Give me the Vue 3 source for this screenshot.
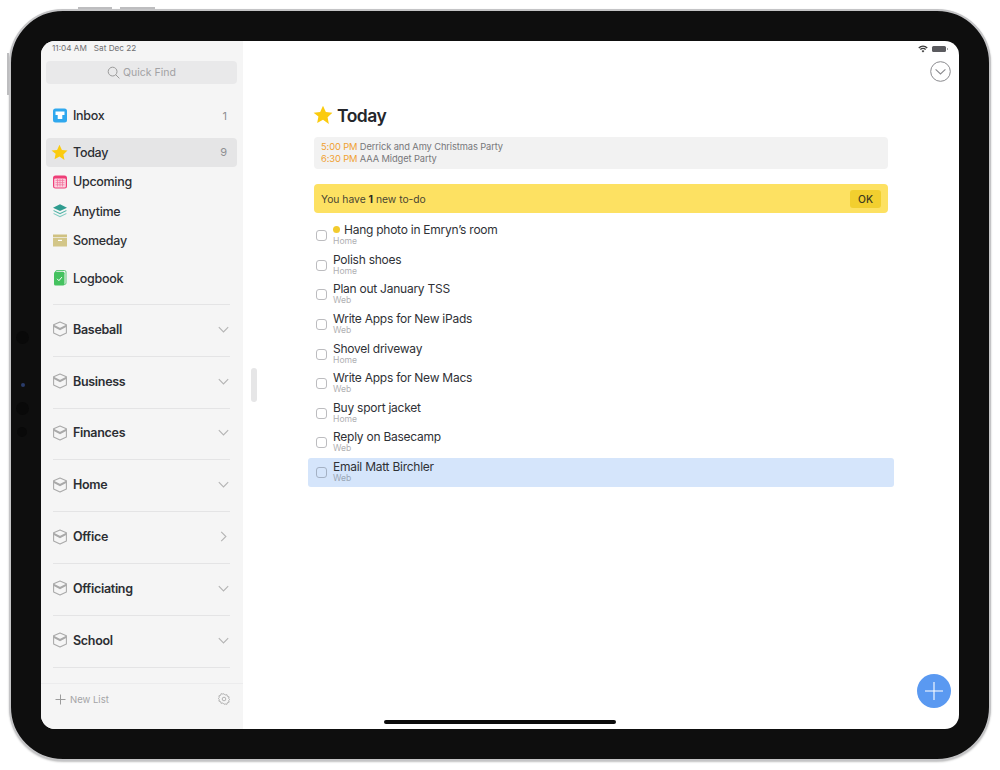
<template>
  <div class="page">
    <div class="device">
      <span class="hw-btn hw-top-a"></span>
      <span class="hw-btn hw-top-b"></span>
      <span class="hw-btn hw-left"></span>
      <span class="cam cam-a"></span>
      <span class="cam cam-b"></span>
      <span class="cam cam-c"></span>
      <span class="cam cam-d"></span>

      <div class="screen">
        <aside class="sidebar">
          <div class="status-left">
            <span>11:04 AM</span>
            <span>Sat Dec 22</span>
          </div>
          <div class="search">
            <svg width="13" height="13" viewBox="0 0 13 13" fill="none" stroke="#9a9a9a" stroke-width="1">
              <circle cx="5.6" cy="5.6" r="4.4" />
              <path d="M8.9 8.9l3.2 3.2" stroke-linecap="round" />
            </svg>
            <span>Quick Find</span>
          </div>

          <div class="nav-item inbox">
            <svg class="nav-icon" width="15" height="15" viewBox="0 0 15 15">
              <rect x="0.5" y="0.5" width="14" height="14" rx="2.5" fill="#2fa8ee" />
              <path d="M3 3.5h9v3.6H9.8v4H5.2v-4H3z" fill="#fff" />
            </svg>
            <span class="nav-label">Inbox</span>
            <span class="count">1</span>
          </div>

          <div class="nav-item active">
            <svg class="nav-icon star" width="17" height="17" viewBox="0 0 24 24">
              <path d="M12 1l3.4 7.3 7.9 1-5.8 5.5 1.5 7.9L12 17.8l-7 3.9 1.5-7.9L.7 9.3l7.9-1z" fill="#fbcb0e" />
            </svg>
            <span class="nav-label">Today</span>
            <span class="count">9</span>
          </div>

          <div class="nav-item">
            <svg class="nav-icon" width="15" height="14" viewBox="0 0 15 14">
              <rect x="0.5" y="0.5" width="14" height="13" rx="2.5" fill="#ee3f78" />
              <rect x="1.7" y="3.4" width="11.6" height="9" rx="1" fill="#fbd3e0" />
              <path d="M3 5.4h9M3 7.6h9M3 9.8h9M5 4v7.5M7.5 4v7.5M10 4v7.5" stroke="#f0709b" stroke-width="0.7" />
            </svg>
            <span class="nav-label">Upcoming</span>
          </div>

          <div class="nav-item">
            <svg class="nav-icon" width="15" height="14" viewBox="0 0 15 14">
              <path d="M7.5 0.3l7 3.4-7 3.4-7-3.4z" fill="#2f9c8f" />
              <path d="M1.6 6.2l5.9 2.9 5.9-2.9 1.1 .6-7 3.4-7-3.4z" fill="#4db3a6" />
              <path d="M1.6 9.2l5.9 2.9 5.9-2.9 1.1 .6-7 3.4-7-3.4z" fill="#7fcabf" />
            </svg>
            <span class="nav-label">Anytime</span>
          </div>

          <div class="nav-item">
            <svg class="nav-icon" width="15" height="13" viewBox="0 0 15 13">
              <rect x="0.5" y="0.5" width="14" height="2.8" fill="#cfc181" />
              <rect x="0.5" y="4" width="14" height="8.5" fill="#d3c688" />
              <rect x="5.5" y="5.8" width="4" height="1.2" fill="#fff" />
            </svg>
            <span class="nav-label">Someday</span>
          </div>

          <div class="nav-item logbook">
            <svg class="nav-icon" width="13" height="16" viewBox="0 0 13 16">
              <rect x="2" y="0.5" width="10.5" height="14" rx="1.5" fill="none" stroke="#5fc77a" />
              <rect x="0.5" y="1.8" width="10.5" height="13.7" rx="1.5" fill="#44c25f" />
              <path d="M3.6 8.8l1.8 1.9 3-3.6" fill="none" stroke="#fff" stroke-width="1" />
            </svg>
            <span class="nav-label">Logbook</span>
          </div>

          <div class="areas">
            <div v-for="area in areas" :key="area.name" class="area">
              <svg class="nav-icon" width="15" height="16" viewBox="0 0 15 15" fill="none" stroke="#a9a9a9" stroke-width="1">
                <path d="M7.5 1l6 2.6v7.6l-6 2.8-6-2.8V3.6z" stroke-linejoin="round" />
                <path d="M1.5 3.9l6 3 6-3M1.5 5l6 3 6-3" />
              </svg>
              <span class="nav-label">{{ area.name }}</span>
              <svg width="11" height="11" viewBox="0 0 11 11" fill="none" stroke="#b4b4b4" stroke-width="1.1" class="chev">
                <path v-if="area.open" d="M.8 3.2l4.7 4.7 4.7-4.7" />
                <path v-else d="M3.2.8l4.7 4.7-4.7 4.7" />
              </svg>
            </div>
          </div>

          <div class="sidebar-foot">
            <svg width="11" height="11" viewBox="0 0 11 11" stroke="#9c9c9c" stroke-width="1">
              <path d="M5.5.5v10M.5 5.5h10" />
            </svg>
            <span class="new-list">New List</span>
            <svg width="12" height="12" viewBox="0 0 24 24" fill="none" stroke="#a8a8a8" stroke-width="1.7">
              <circle cx="12" cy="12" r="3.6" />
              <path d="M12 1.5l2.4 2.6 3.4-.8 1 3.4 3.4 1-.8 3.4 2 1.9-2 1.9.8 3.4-3.4 1-1 3.4-3.4-.8L12 22.5l-2.4-2.6-3.4.8-1-3.4-3.4-1 .8-3.4-2-1.9 2-1.9-.8-3.4 3.4-1 1-3.4 3.4.8z" stroke-linejoin="round" />
            </svg>
          </div>
        </aside>

        <span class="grabber"></span>

        <main class="main">
          <div class="status-right">
            <svg width="10" height="8" viewBox="0 0 10 8" fill="#3a3a3a">
              <path d="M5 7.6L3.6 6a2 2 0 0 1 2.8 0zM2.8 5.1l-.9-1a4.6 4.6 0 0 1 6.2 0l-.9 1a3.3 3.3 0 0 0-4.4 0zM1.2 3.4L.3 2.4a7 7 0 0 1 9.4 0l-.9 1a5.7 5.7 0 0 0-7.6 0z" />
            </svg>
            <span class="battery"></span>
          </div>
          <div class="top-action">
            <svg width="21" height="21" viewBox="0 0 21 21" fill="none" stroke="#8a8a8e" stroke-width="1">
              <circle cx="10.5" cy="10.5" r="9.8" />
              <path d="M5.6 8.4l4.9 4.6 4.9-4.6" stroke-width="1.1" />
            </svg>
          </div>

          <div class="content">
            <h1 class="title">
              <svg width="20" height="20" viewBox="0 0 24 24">
                <path d="M12 1l3.4 7.3 7.9 1-5.8 5.5 1.5 7.9L12 17.8l-7 3.9 1.5-7.9L.7 9.3l7.9-1z" fill="#fbcb0e" />
              </svg>
              Today
            </h1>

            <div class="events">
              <div v-for="ev in events" :key="ev.time" class="event">
                <span class="event-time">{{ ev.time }}</span> {{ ev.name }}
              </div>
            </div>

            <div class="banner">
              <span>You have <b>1</b> new to-do</span>
              <span class="ok">OK</span>
            </div>

            <div class="todos">
              <div v-for="todo in todos" :key="todo.title" class="todo" :class="{ selected: todo.selected }">
                <span class="check"></span>
                <div class="todo-text">
                  <div class="todo-title">
                    <span v-if="todo.isNew" class="dot"></span>{{ todo.title }}
                  </div>
                  <div class="todo-sub">{{ todo.area }}</div>
                </div>
              </div>
            </div>
          </div>

          <button class="fab" aria-label="Add">
            <svg width="18" height="18" viewBox="0 0 18 18" stroke="#fff" stroke-width="1.1">
              <path d="M9 0v18M0 9h18" />
            </svg>
          </button>
          <span class="home-bar"></span>
        </main>
      </div>
    </div>
  </div>
</template>

<script setup>
const areas = [
  { name: "Baseball", open: true },
  { name: "Business", open: true },
  { name: "Finances", open: true },
  { name: "Home", open: true },
  { name: "Office", open: false },
  { name: "Officiating", open: true },
  { name: "School", open: true },
];

const events = [
  { time: "5:00 PM", name: "Derrick and Amy Christmas Party" },
  { time: "6:30 PM", name: "AAA Midget Party" },
];

const todos = [
  { title: "Hang photo in Emryn’s room", area: "Home", isNew: true },
  { title: "Polish shoes", area: "Home" },
  { title: "Plan out January TSS", area: "Web" },
  { title: "Write Apps for New iPads", area: "Web" },
  { title: "Shovel driveway", area: "Home" },
  { title: "Write Apps for New Macs", area: "Web" },
  { title: "Buy sport jacket", area: "Home" },
  { title: "Reply on Basecamp", area: "Web" },
  { title: "Email Matt Birchler", area: "Web", selected: true },
];
</script>

<style>
html,
body {
  margin: 0;
  background: #fff;
}
</style>

<style scoped>
.page {
  width: 1000px;
  height: 770px;
  box-sizing: border-box;
  padding: 9px;
  overflow: hidden;
  font-family: Inter, "Liberation Sans", sans-serif;
  color: #2a2c30;
}

.device {
  position: relative;
  width: 982px;
  height: 752px;
  box-sizing: border-box;
  padding: 30px;
  background: #0e0e0e;
  border: 2px solid #c4c4c6;
  border-radius: 54px;
  box-shadow: 0 1px 2px rgba(0, 0, 0, 0.25);
}

.hw-btn {
  position: absolute;
  background: #bdbdbf;
}

.hw-top-a {
  top: -4px;
  left: 67px;
  width: 34px;
  height: 2px;
}

.hw-top-b {
  top: -4px;
  left: 109px;
  width: 35px;
  height: 2px;
}

.hw-left {
  top: 42px;
  left: -4px;
  width: 2px;
  height: 42px;
}

.cam {
  position: absolute;
  left: 5px;
  width: 13px;
  height: 13px;
  border-radius: 50%;
  background: #090909;
}

.cam-a {
  top: 320px;
}

.cam-b {
  top: 372px;
  left: 10px;
  width: 4px;
  height: 4px;
  background: #2a3c6a;
}

.cam-c {
  top: 391px;
}

.cam-d {
  top: 416px;
  left: 6px;
  width: 10px;
  height: 10px;
}

.screen {
  position: relative;
  display: flex;
  width: 918px;
  height: 688px;
  background: #fff;
  border-radius: 14px;
  overflow: hidden;
}

.sidebar {
  display: flex;
  flex-direction: column;
  flex: 0 0 202px;
  box-sizing: border-box;
  padding: 0 6px 0 5px;
  background: #f5f5f5;
}

.status-left {
  display: flex;
  gap: 7px;
  flex: none;
  height: 20px;
  padding: 2px 0 0 6px;
  box-sizing: border-box;
  font-size: 8.2px;
  line-height: 11px;
  color: #6f6f72;
}

.search {
  display: flex;
  align-items: center;
  justify-content: center;
  gap: 3px;
  height: 23px;
  flex: none;
  background: #e9e9ea;
  border-radius: 4px;
  font-size: 10.5px;
  color: #a2a2a4;
}

.nav-item {
  display: flex;
  align-items: center;
  flex: none;
  height: 29.5px;
  padding: 0 10px 0 7px;
  border-radius: 4px;
}

.nav-item.inbox {
  margin-top: 17px;
}

.nav-item.active {
  margin-top: 7px;
  background: #e5e5e6;
}

.nav-item.logbook {
  margin-top: 8px;
}

.nav-icon {
  flex: none;
  width: 16px;
  margin-left: -1px;
  margin-right: 5px;
}

.star {
  width: 17px;
  margin-left: -2px;
}

.nav-label {
  flex: 1;
  font-size: 12.5px;
  font-weight: 500;
  letter-spacing: -0.3px;
  color: #2c2e33;
}

.count {
  font-size: 11px;
  color: #8f8f92;
}

.areas {
  display: flex;
  flex-direction: column;
  flex: none;
  margin: 11px 7px 0 7px;
  border-top: 1px solid #e4e4e5;
}

.area {
  display: flex;
  align-items: center;
  box-sizing: border-box;
  height: 51.8px;
  padding-bottom: 2px;
  border-bottom: 1px solid #e4e4e5;
}

.area .nav-label {
  font-weight: 600;
}

.chev {
  flex: none;
  margin-right: 1px;
}

.sidebar-foot {
  display: flex;
  align-items: center;
  gap: 4px;
  flex: none;
  height: 46px;
  margin: 15px -6px 0 -5px;
  padding: 0 13px 14px 14px;
  border-top: 1px solid #ececed;
  box-sizing: border-box;
}

.new-list {
  flex: 1;
  font-size: 9.5px;
  color: #a4a4a6;
}

.grabber {
  position: absolute;
  left: 210px;
  top: 327px;
  width: 6px;
  height: 34px;
  border-radius: 3px;
  background: #e6e6e7;
}

.main {
  flex: 1;
  min-width: 0;
}

.status-right {
  display: flex;
  justify-content: flex-end;
  align-items: center;
  gap: 4px;
  height: 15px;
  padding: 0 13px 0 0;
}

.battery {
  position: relative;
  width: 14px;
  height: 6px;
  background: #5b5b5f;
  border-radius: 1.5px;
}

.battery::after {
  content: "";
  position: absolute;
  right: -2px;
  top: 2px;
  width: 1px;
  height: 2px;
  background: #a8a8aa;
}

.top-action {
  display: flex;
  justify-content: flex-end;
  height: 21px;
  margin-top: 5px;
  padding-right: 8px;
}

.content {
  width: 574px;
  margin-left: 71px;
  padding-top: 20px;
}

.title {
  display: flex;
  align-items: center;
  gap: 4px;
  margin: 0 0 0 -1px;
  height: 26px;
  font-size: 17.5px;
  font-weight: 600;
  letter-spacing: -0.5px;
  color: #24262b;
}

.events {
  margin-top: 9px;
  padding: 4px 7px;
  height: 32px;
  box-sizing: border-box;
  background: #f2f2f2;
  border-radius: 4px;
  font-size: 9.3px;
  line-height: 12px;
  letter-spacing: -0.1px;
  color: #77777a;
}

.event-time {
  color: #f0a030;
}

.banner {
  display: flex;
  align-items: center;
  justify-content: space-between;
  margin-top: 15px;
  height: 29px;
  padding: 0 7px;
  background: #fde162;
  border-radius: 4px;
  font-size: 10.3px;
  color: #4a4632;
}

.banner b {
  color: #26261f;
}

.ok {
  display: flex;
  align-items: center;
  justify-content: center;
  width: 31px;
  height: 18px;
  background: #f2cf2f;
  border-radius: 3px;
  font-size: 10.3px;
  font-weight: 500;
  color: #3e3a20;
}

.todos {
  margin: 8px -6px 0 -6px;
}

.todo {
  display: flex;
  align-items: center;
  height: 29.6px;
  padding-left: 8px;
  border-radius: 3px;
}

.todo.selected {
  background: #d5e5fb;
}

.check {
  flex: none;
  width: 9px;
  height: 9px;
  background: #fff;
  border: 1px solid #bcbcbf;
  border-radius: 3px;
}

.selected .check {
  background: #d5e5fb;
  border-color: #a4b1c4;
}

.todo-text {
  margin-left: 6px;
  margin-top: -3px;
}

.todo-title {
  display: flex;
  align-items: center;
  font-size: 12px;
  line-height: 15px;
  letter-spacing: -0.25px;
  color: #2f3136;
}

.dot {
  width: 7px;
  height: 7px;
  margin-right: 4px;
  border-radius: 50%;
  background: #f2cb2e;
}

.todo-sub {
  font-size: 8.6px;
  line-height: 9px;
  color: #b0b0b3;
}

.selected .todo-sub {
  color: #9aa5b5;
}

.fab {
  position: absolute;
  right: 8px;
  bottom: 21px;
  display: flex;
  align-items: center;
  justify-content: center;
  width: 34px;
  height: 34px;
  padding: 0;
  border: none;
  border-radius: 50%;
  background: #5a99f1;
}

.home-bar {
  position: absolute;
  left: 343px;
  bottom: 5px;
  width: 232px;
  height: 4px;
  border-radius: 2px;
  background: #0b0b0b;
}
</style>
